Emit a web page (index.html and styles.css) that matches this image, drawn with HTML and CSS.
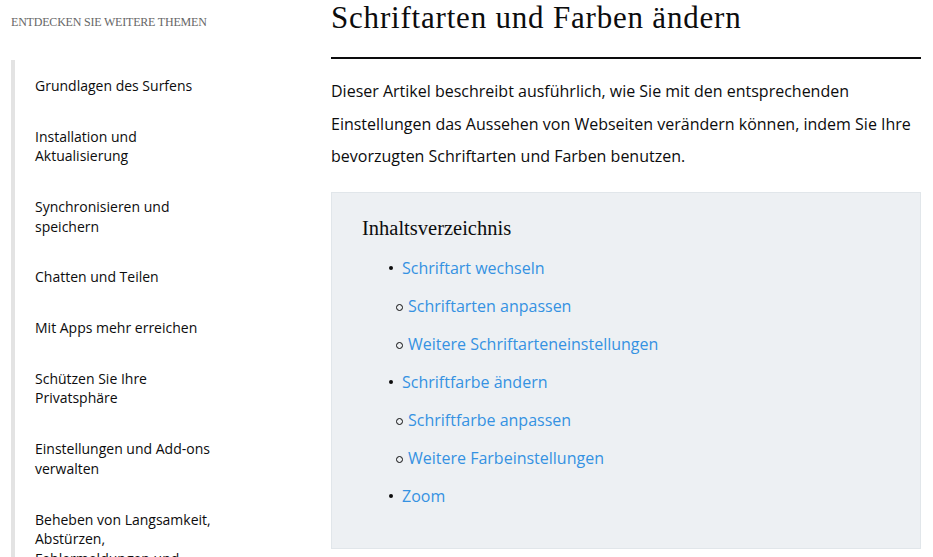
FILE: index.html
```html
<!DOCTYPE html>
<html lang="de">
  <head>
    <meta charset="UTF-8" />
    <meta name="viewport" content="width=device-width, initial-scale=1.0" />
    <title>Schriftarten und Farben ändern</title>
    <link rel="stylesheet" href="styles.css">
  </head>
  <body>
    <div class="page">
      <aside class="sidebar">
        <h2 class="sidebar-title">Entdecken Sie weitere Themen</h2>
        <ul class="topics">
          <li><a href="#">Grundlagen des Surfens</a></li>
          <li><a href="#">Installation und Aktualisierung</a></li>
          <li><a href="#">Synchronisieren und speichern</a></li>
          <li><a href="#">Chatten und Teilen</a></li>
          <li><a href="#">Mit Apps mehr erreichen</a></li>
          <li><a href="#">Schützen Sie Ihre Privatsphäre</a></li>
          <li><a href="#">Einstellungen und Add-ons verwalten</a></li>
          <li><a href="#">Beheben von Langsamkeit, Abstürzen, Fehlermeldungen und anderen Problemen</a></li>
        </ul>
      </aside>
      <main class="article">
        <h1>Schriftarten und Farben ändern</h1>
        <p class="intro">
          Dieser Artikel beschreibt ausführlich, wie Sie mit den entsprechenden
          Einstellungen das Aussehen von Webseiten verändern können, indem Sie Ihre
          bevorzugten Schriftarten und Farben benutzen.
        </p>
        <section class="toc">
          <h2>Inhaltsverzeichnis</h2>
          <ul>
            <li><a href="#">Schriftart wechseln</a></li>
            <li class="sub"><a href="#">Schriftarten anpassen</a></li>
            <li class="sub"><a href="#">Weitere Schriftarteneinstellungen</a></li>
            <li><a href="#">Schriftfarbe ändern</a></li>
            <li class="sub"><a href="#">Schriftfarbe anpassen</a></li>
            <li class="sub"><a href="#">Weitere Farbeinstellungen</a></li>
            <li><a href="#">Zoom</a></li>
          </ul>
        </section>
      </main>
    </div>
  </body>
</html>
```

FILE: styles.css
```css
* {
  padding: 0;
  margin: 0;
  box-sizing: border-box;
}
html {
  font-size: 16px;
  font-family: 'Open Sans', sans-serif;
  color: #0c0c0d;
  background-color: #fff;
}
body {
  min-height: 100vh;
  overflow: hidden;
}
a {
  text-decoration: none;
}
.page {
  display: flex;
  align-items: flex-start;
}
/* left column */
.sidebar {
  width: 331px;
  flex-shrink: 0;
  padding-left: 11px;
}
.sidebar-title {
  font-family: 'Liberation Serif', serif;
  font-weight: normal;
  font-size: 12px;
  letter-spacing: -0.2px;
  text-transform: uppercase;
  color: #666;
  line-height: 16px;
  padding-top: 14px;
  margin-bottom: 30px;
}
.topics {
  list-style: none;
  border-left: 4px solid #e3e3e3;
  padding-left: 20px;
}
.topics li {
  width: 186px;
  padding: 16px 0 15.3px;
  font-size: 14px;
  line-height: 19.5px;
}
.topics a {
  color: #0c0c0d;
}
/* article */
.article {
  width: 590px;
  flex-shrink: 0;
}
.article h1 {
  font-family: 'Liberation Serif', serif;
  font-weight: normal;
  font-size: 31px;
  letter-spacing: 0.8px;
  line-height: 36px;
  padding-bottom: 21px;
  border-bottom: 2px solid #0c0c0d;
}
.intro {
  margin-top: 16px;
  font-size: 16px;
  line-height: 32.5px;
}
.toc {
  margin-top: 19px;
  background-color: #edf0f3;
  border: 1px solid #e1e6ea;
  padding: 23px 30px 33px;
}
.toc h2 {
  font-family: 'Liberation Serif', serif;
  font-weight: normal;
  font-size: 20.5px;
  line-height: 24px;
}
.toc ul {
  list-style: none;
  margin-top: 9px;
  padding-left: 40px;
}
.toc li {
  position: relative;
  line-height: 38px;
  font-size: 16px;
}
.toc li::before {
  content: '';
  position: absolute;
  left: -13px;
  top: 17px;
  width: 4px;
  height: 4px;
  border-radius: 50%;
  background-color: #0c0c0d;
}
.toc li.sub {
  padding-left: 6px;
}
.toc li.sub::before {
  left: -6px;
  width: 5px;
  height: 5px;
  background-color: transparent;
  border: 1px solid #0c0c0d;
}
.toc a {
  color: #3592e2;
}
```
